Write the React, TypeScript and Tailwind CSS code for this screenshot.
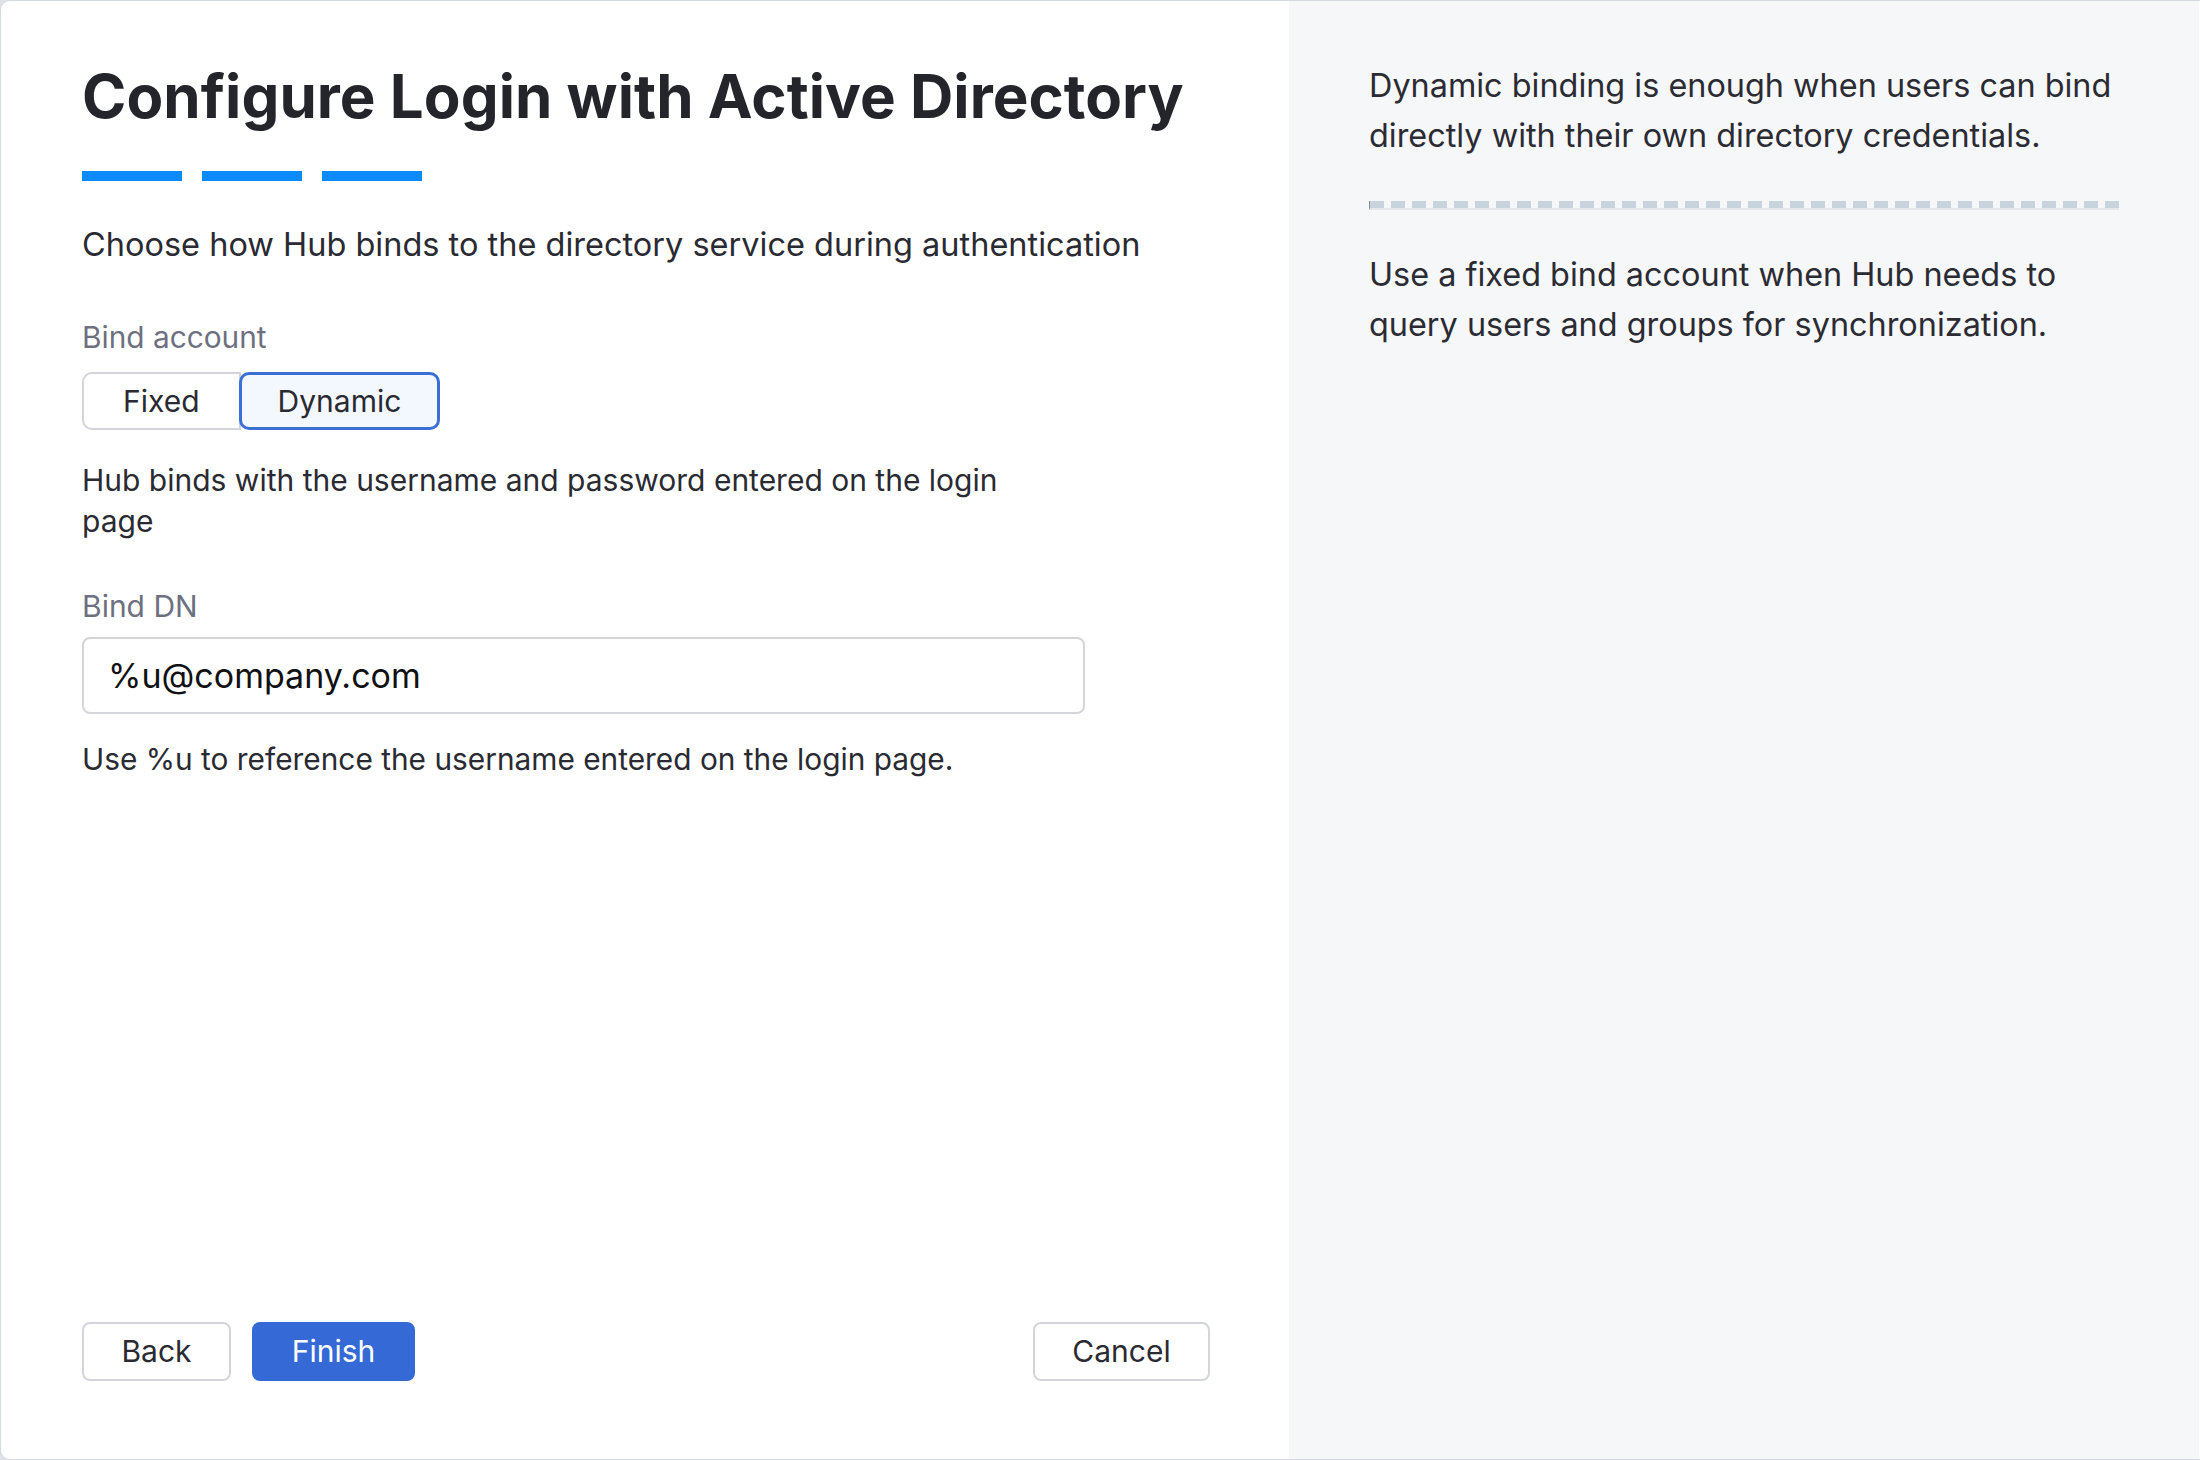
import React, { useState } from "react";

type Mode = "fixed" | "dynamic";

export default function App() {
    const [mode, setMode] = useState<Mode>("dynamic");
    const [bindDn, setBindDn] = useState("%u@company.com");

    return (
        <div className="h-[1460px] w-[2200px] overflow-hidden bg-[#dde2e8] font-['Inter','Noto_Sans',sans-serif]">
            <div className="flex h-[1460px] w-[2220px] overflow-hidden rounded-[10px] border border-[#d5dae1] bg-white">
                {/* left: form */}
                <div className="flex w-[1288px] flex-col pl-[81px] pr-[79px] pt-[59px] pb-[78px] text-[#2a2a32]">
                    <h1 className="text-[60px] font-bold leading-[72px] tracking-[0.05px] text-[#24252b]">
                        Configure Login with Active Directory
                    </h1>
                    <div className="mt-[39px] flex gap-[20px]">
                        <span className="h-[10px] w-[100px] bg-[#0a8bf7]" />
                        <span className="h-[10px] w-[100px] bg-[#0a8bf7]" />
                        <span className="h-[10px] w-[100px] bg-[#0a8bf7]" />
                    </div>
                    <p className="mt-[40px] text-[32.5px] leading-[48px]">
                        Choose how Hub binds to the directory service during authentication
                    </p>

                    <div className="mt-[48px] text-[29.8px] leading-[40px] text-[#6d7080]">Bind account</div>
                    <div className="mt-[15px] flex">
                        <button
                            className={`h-[58px] rounded-l-[10px] border-2 px-[39px] text-[30px] ${mode === "fixed" ? "rounded-[10px] border-[#3a6fd6] bg-[#f3f7fe]" : "border-[#d4d5da] bg-white"}`}
                            onClick={() => setMode("fixed")}
                        >
                            Fixed
                        </button>
                        <button
                            className={`-ml-[2px] h-[58px] rounded-[10px] border-[3px] px-[36px] text-[30px] ${mode === "dynamic" ? "border-[#3a6fd6] bg-[#f3f7fe]" : "border-[#d4d5da] bg-white"}`}
                            onClick={() => setMode("dynamic")}
                        >
                            Dynamic
                        </button>
                    </div>
                    <p className="mt-[30px] max-w-[960px] text-[30px] leading-[41px]">
                        Hub binds with the username and password entered on the login page
                    </p>

                    <div className="mt-[44px] text-[30px] leading-[40px] text-[#6d7080]">Bind DN</div>
                    <input
                        className="mt-[11px] h-[77px] w-[1003px] rounded-[8px] border-2 border-[#d4d5da] px-[24px] text-[34px] text-[#111114] outline-none"
                        value={bindDn}
                        onChange={(e) => setBindDn(e.target.value)}
                    />
                    <p className="mt-[25px] text-[29.85px] leading-[41px]">
                        Use %u to reference the username entered on the login page.
                    </p>

                    <div className="mt-auto flex items-center">
                        <button className="h-[59px] w-[149px] rounded-[8px] border-2 border-[#d4d5da] bg-white text-[30px]">
                            Back
                        </button>
                        <button className="ml-[21px] h-[59px] w-[163px] rounded-[8px] bg-[#3469d6] text-[30px] text-white">
                            Finish
                        </button>
                        <button className="ml-auto h-[59px] w-[177px] rounded-[8px] border-2 border-[#d4d5da] bg-white text-[30px]">
                            Cancel
                        </button>
                    </div>
                </div>

                {/* right: hints */}
                <div className="w-[910px] bg-[#f6f7f9] px-[80px] pt-[60px] text-[32.4px] leading-[50px] text-[#2b2b33]">
                    <p>Dynamic binding is enough when users can bind directly with their own directory credentials.</p>
                    <div className="mt-[40px] border-b-2 border-l border-[#e6e7ea] border-l-[#8a8a8a]">
                        <div className="h-[7px] bg-[repeating-linear-gradient(90deg,#c8d3dd_0_14px,transparent_14px_21px)]" />
                    </div>
                    <p className="mt-[40px]">Use a fixed bind account when Hub needs to query users and groups for synchronization.</p>
                </div>
            </div>
        </div>
    );
}
